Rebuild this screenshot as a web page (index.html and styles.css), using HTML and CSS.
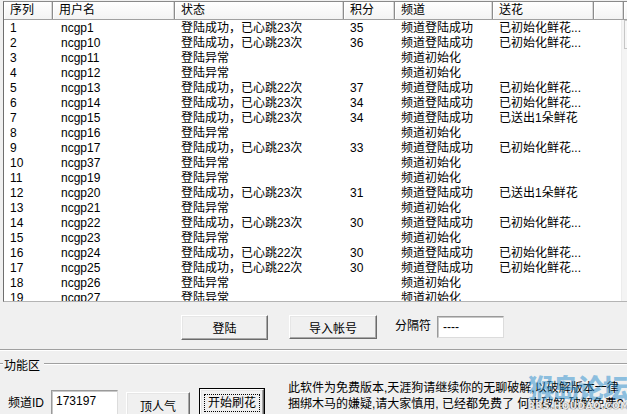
FILE: index.html
```html
<!DOCTYPE html>
<html>
<head>
<meta charset="utf-8">
<link rel="stylesheet" href="styles.css">
</head>
<body>
<div class="app">
  <div class="list">
    <div class="header">
      <div class="hc">序列</div>
      <div class="hc">用户名</div>
      <div class="hc">状态</div>
      <div class="hc">积分</div>
      <div class="hc">频道</div>
      <div class="hc">送花</div>
      <div class="hc"></div>
      <div class="hc"></div>
    </div>
    <div class="body">
      <div class="rows">
        <div class="row"><span>1</span><span>ncgp1</span><span>登陆成功，已心跳23次</span><span>35</span><span>频道登陆成功</span><span>已初始化鲜花...</span></div>
        <div class="row"><span>2</span><span>ncgp10</span><span>登陆成功，已心跳23次</span><span>36</span><span>频道登陆成功</span><span>已初始化鲜花...</span></div>
        <div class="row"><span>3</span><span>ncgp11</span><span>登陆异常</span><span></span><span>频道初始化</span><span></span></div>
        <div class="row"><span>4</span><span>ncgp12</span><span>登陆异常</span><span></span><span>频道初始化</span><span></span></div>
        <div class="row"><span>5</span><span>ncgp13</span><span>登陆成功，已心跳22次</span><span>37</span><span>频道登陆成功</span><span>已初始化鲜花...</span></div>
        <div class="row"><span>6</span><span>ncgp14</span><span>登陆成功，已心跳23次</span><span>34</span><span>频道登陆成功</span><span>已初始化鲜花...</span></div>
        <div class="row"><span>7</span><span>ncgp15</span><span>登陆成功，已心跳23次</span><span>34</span><span>频道登陆成功</span><span>已送出1朵鲜花</span></div>
        <div class="row"><span>8</span><span>ncgp16</span><span>登陆异常</span><span></span><span>频道初始化</span><span></span></div>
        <div class="row"><span>9</span><span>ncgp17</span><span>登陆成功，已心跳23次</span><span>33</span><span>频道登陆成功</span><span>已初始化鲜花...</span></div>
        <div class="row"><span>10</span><span>ncgp37</span><span>登陆异常</span><span></span><span>频道初始化</span><span></span></div>
        <div class="row"><span>11</span><span>ncgp19</span><span>登陆异常</span><span></span><span>频道初始化</span><span></span></div>
        <div class="row"><span>12</span><span>ncgp20</span><span>登陆成功，已心跳23次</span><span>31</span><span>频道登陆成功</span><span>已送出1朵鲜花</span></div>
        <div class="row"><span>13</span><span>ncgp21</span><span>登陆异常</span><span></span><span>频道初始化</span><span></span></div>
        <div class="row"><span>14</span><span>ncgp22</span><span>登陆成功，已心跳23次</span><span>30</span><span>频道登陆成功</span><span>已初始化鲜花...</span></div>
        <div class="row"><span>15</span><span>ncgp23</span><span>登陆异常</span><span></span><span>频道初始化</span><span></span></div>
        <div class="row"><span>16</span><span>ncgp24</span><span>登陆成功，已心跳22次</span><span>30</span><span>频道登陆成功</span><span>已初始化鲜花...</span></div>
        <div class="row"><span>17</span><span>ncgp25</span><span>登陆成功，已心跳22次</span><span>30</span><span>频道登陆成功</span><span>已初始化鲜花...</span></div>
        <div class="row"><span>18</span><span>ncgp26</span><span>登陆异常</span><span></span><span>频道初始化</span><span></span></div>
        <div class="row"><span>19</span><span>ncgp27</span><span>登陆异常</span><span></span><span>频道初始化</span><span></span></div>
      </div>
      <div class="vscroll"><div class="vbtn"></div></div>
    </div>
  </div>

  <div class="toolbar">
    <div class="btn btn-login">登陆</div>
    <div class="btn btn-import">导入帐号</div>
    <span class="lbl sep-lbl">分隔符</span>
    <div class="input input-sep">----</div>
  </div>

  <div class="divider"></div>

  <div class="group-title">
    <span class="gline gline-left"></span>
    <span class="gtext">功能区</span>
    <span class="gline gline-fill"></span>
  </div>

  <div class="bottom">
    <span class="lbl ch-lbl">频道ID</span>
    <div class="input input-ch">173197</div>
    <div class="btn btn-top">顶人气</div>
    <div class="btn btn-start btn-default"><span class="focus">开始刷花</span></div>
    <div class="notice">此软件为免费版本,天涯狗请继续你的无聊破解,以破解版本一律<br>捆绑木马的嫌疑,请大家慎用, 已经都免费了 何来破解,破解免费?</div>
  </div>

  <div class="watermark">
    <div class="wm-big">猴岛论坛</div>
    <div class="wm-small">BBS.HOUDAO.COM</div>
  </div>
</div>
</body>
</html>
```

FILE: styles.css
```css
html, body {
  margin: 0;
  padding: 0;
}
body {
  width: 627px;
  height: 414px;
  overflow: hidden;
  background: #f0f0f0;
  font-family: "Liberation Sans", "Noto Sans CJK SC", sans-serif;
  font-size: 12px;
  color: #000;
}
.app {
  position: relative;
  width: 627px;
  height: 414px;
  overflow: hidden;
}
.list {
  margin: 1px 0 0 3px;
  width: 640px;
  height: 299px;
  background: #fff;
  border-top: 1px solid #8a8a8a;
  border-left: 1px solid #6e6e6e;
  border-bottom: 1px solid #b4b4b4;
  overflow: hidden;
}
.header {
  display: grid;
  grid-template-columns: 49px 122px 169px 51px 98px 101px 30px 40px;
  height: 17px;
  border-bottom: 1px solid #a0a0a0;
  background: linear-gradient(#ffffff, #f3f3f3);
}
.hc {
  box-sizing: border-box;
  padding-left: 6px;
  line-height: 17px;
  border-right: 1px solid #8c8c8c;
  box-shadow: inset -1px 0 0 #d8d8d8, inset 1px 0 0 #ffffff;
  white-space: nowrap;
}
.body {
  display: flex;
  height: 281px;
}
.rows {
  width: 617px;
  padding-top: 1px;
  overflow: hidden;
}
.row {
  display: grid;
  grid-template-columns: 49px 122px 169px 51px 98px 101px;
  height: 15px;
  line-height: 15px;
  white-space: nowrap;
}
.row span {
  padding-left: 6px;
  overflow: hidden;
}
.row span:nth-child(2) {
  padding-left: 8px;
}
.vscroll {
  width: 20px;
  background: #f4f4f4;
  border-left: 1px solid #ececec;
  padding-left: 2px;
}
.vbtn {
  height: 27px;
  border: 1px solid #c6c6c6;
  background: #f6f6f6;
}

.btn {
  box-sizing: border-box;
  display: flex;
  align-items: center;
  justify-content: center;
  background: #f0f0f0;
  border: 1px solid;
  border-color: #ffffff #6b6b6b #6b6b6b #ffffff;
  box-shadow: inset -1px -1px 0 #a8a8a8, inset 1px 1px 0 #e6e6e6;
  white-space: nowrap;
}
.input {
  box-sizing: border-box;
  background: #fff;
  border: 1px solid;
  border-color: #9a9a9a #dcdcdc #dcdcdc #9a9a9a;
  box-shadow: inset 1px 1px 0 #c8c8c8;
  padding-left: 5px;
  line-height: 20px;
  white-space: nowrap;
}
.lbl {
  white-space: nowrap;
}

.toolbar {
  display: flex;
  align-items: flex-start;
  padding-top: 13px;
  height: 34px;
}
.btn-login {
  margin-left: 181px;
  width: 87px;
  height: 25px;
}
.btn-import {
  margin-left: 21px;
  width: 88px;
  height: 24px;
}
.sep-lbl {
  margin-left: 18px;
  line-height: 22px;
}
.input-sep {
  margin-left: 6px;
  margin-top: 1px;
  width: 67px;
  height: 22px;
}

.divider {
  height: 0;
  border-top: 1px solid #a0a0a0;
  border-bottom: 1px solid #ffffff;
}

.group-title {
  display: flex;
  align-items: center;
  margin-top: 6px;
  height: 14px;
}
.gline {
  height: 0;
  border-top: 1px solid #a0a0a0;
  border-bottom: 1px solid #ffffff;
}
.gline-left {
  width: 3px;
}
.gtext {
  padding: 0 4px 0 1px;
  line-height: 14px;
  position: relative;
  top: 2px;
}
.gline-fill {
  flex: 1;
}

.bottom {
  display: flex;
  align-items: flex-start;
  margin-top: 8px;
  height: 46px;
}
.ch-lbl {
  margin-left: 8px;
  margin-top: 14px;
}
.input-ch {
  margin-left: 7px;
  margin-top: 11px;
  width: 67px;
  height: 26px;
  padding-left: 4px;
}
.btn-top {
  margin-left: 8px;
  margin-top: 13px;
  width: 64px;
  height: 26px;
}
.btn-start {
  margin-left: 10px;
  margin-top: 10px;
  width: 64px;
  height: 28px;
}
.btn-default {
  outline: 1px solid #000;
  outline-offset: 0;
}
.focus {
  border: 1px dotted #000;
  padding: 1px 3px;
  line-height: 14px;
}
.notice {
  margin-left: 24px;
  margin-top: 1px;
  line-height: 16px;
  white-space: nowrap;
}

.watermark {
  position: absolute;
  left: 528px;
  top: 371px;
  width: 110px;
  pointer-events: none;
}
.wm-big {
  font-family: "Noto Sans CJK SC", sans-serif;
  font-weight: 900;
  font-size: 26px;
  line-height: 32px;
  color: rgba(40, 140, 205, 0.5);
  letter-spacing: -1px;
}
.wm-small {
  font-family: "DejaVu Sans", sans-serif;
  font-weight: bold;
  font-size: 9px;
  line-height: 10px;
  color: rgba(255, 255, 255, 0.85);
  text-shadow: 0 0 1px #777, 0 0 1px #777;
  letter-spacing: 0.5px;
  margin-top: -2px;
}
```
